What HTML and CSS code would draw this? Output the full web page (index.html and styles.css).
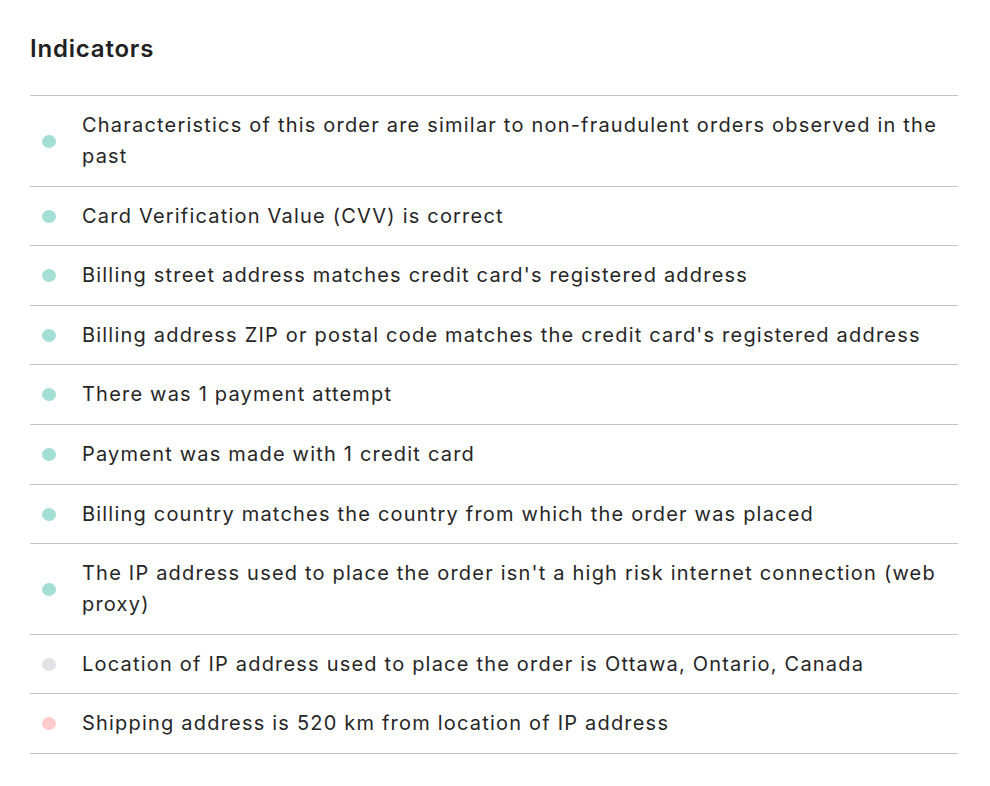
FILE: index.html
```html
<!DOCTYPE html>
<html lang="en">
<head>
<meta charset="utf-8">
<title>Indicators</title>
<link rel="stylesheet" href="styles.css">
</head>
<body>
<section class="panel">
  <h2 class="title">Indicators</h2>
  <ul class="list">
    <li class="row"><span class="dot ok"></span><span class="text">Characteristics of this order are similar to non-fraudulent orders observed in the past</span></li>
    <li class="row"><span class="dot ok"></span><span class="text">Card Verification Value (CVV) is correct</span></li>
    <li class="row"><span class="dot ok"></span><span class="text">Billing street address matches credit card's registered address</span></li>
    <li class="row"><span class="dot ok"></span><span class="text">Billing address ZIP or postal code matches the credit card's registered address</span></li>
    <li class="row"><span class="dot ok"></span><span class="text">There was 1 payment attempt</span></li>
    <li class="row"><span class="dot ok"></span><span class="text">Payment was made with 1 credit card</span></li>
    <li class="row"><span class="dot ok"></span><span class="text">Billing country matches the country from which the order was placed</span></li>
    <li class="row"><span class="dot ok"></span><span class="text">The IP address used to place the order isn't a high risk internet connection (web proxy)</span></li>
    <li class="row"><span class="dot neutral"></span><span class="text">Location of IP address used to place the order is Ottawa, Ontario, Canada</span></li>
    <li class="row"><span class="dot risk"></span><span class="text">Shipping address is 520 km from location of IP address</span></li>
  </ul>
</section>
</body>
</html>
```

FILE: styles.css
```css
html, body {
  margin: 0;
  padding: 0;
  background: #ffffff;
}

body {
  font-family: Inter, "Noto Sans", "Liberation Sans", sans-serif;
  color: #212121;
}

.panel {
  padding: 33px 32px 0 30px;
}

.title {
  margin: 0 0 30px 0;
  font-size: 24px;
  line-height: 32px;
  font-weight: 600;
  letter-spacing: 0.8px;
  color: #212121;
}

.list {
  list-style: none;
  margin: 0;
  padding: 0;
  border-top: 1px solid #c4c4c4;
}

.row {
  display: flex;
  align-items: center;
  gap: 26px;
  padding: 14px 12px 13.6px 12px;
  border-bottom: 1px solid #c4c4c4;
}

.dot {
  flex: 0 0 14px;
  width: 14px;
  height: 13px;
  border-radius: 50%;
}

.dot.ok { background: #a3dfd4; }
.dot.neutral { background: #e2e2e6; }
.dot.risk { background: #ffcbcb; }

.text {
  font-size: 20px;
  line-height: 31px;
  color: #262626;
  letter-spacing: 1.2px;
}
```
